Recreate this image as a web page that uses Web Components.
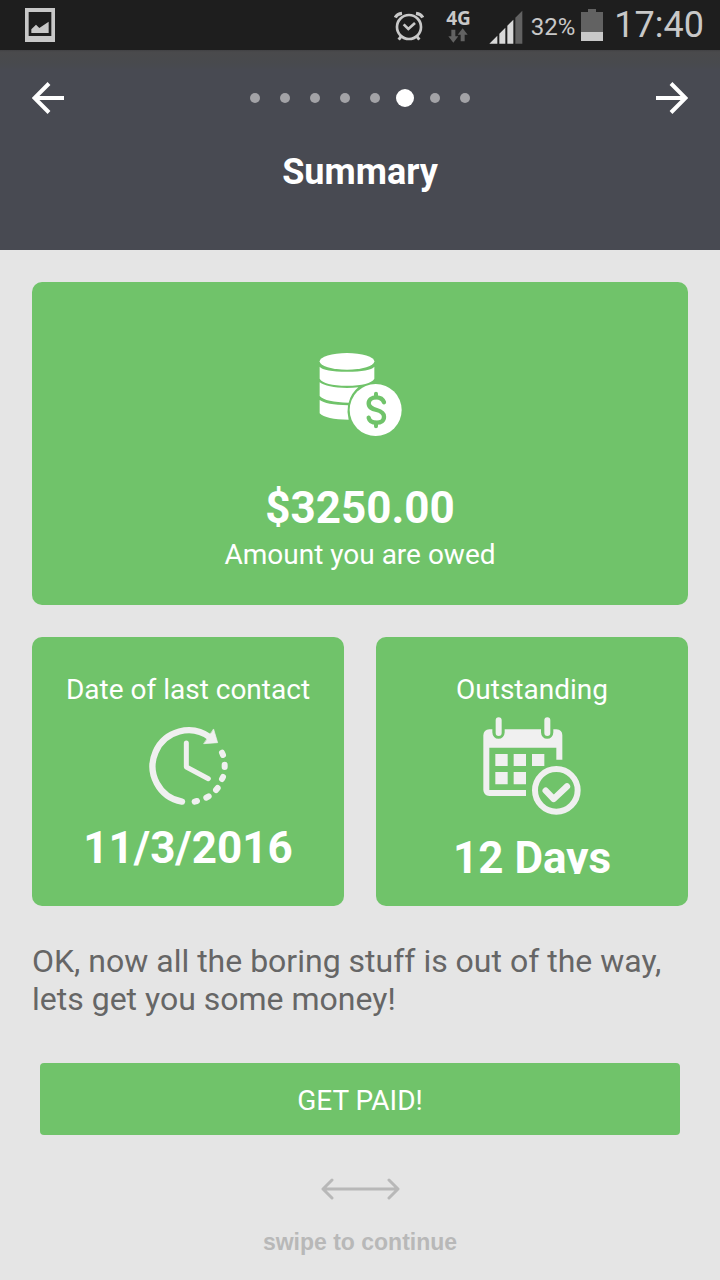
<!DOCTYPE html>
<html lang="en">
<head>
<meta charset="utf-8">
<meta name="viewport" content="width=device-width, initial-scale=1">
<title>Summary</title>
<style>
  html, body { margin: 0; min-height: 100%; background: #e5e5e5; }
  body { font-family: Roboto, "Liberation Sans", sans-serif; color: #666; --green: #70c36a; }
</style>
</head>
<body>
<summary-screen></summary-screen>

<script>
function define(name, html) {
  const template = document.createElement('template');
  template.innerHTML = html;
  customElements.define(name, class extends HTMLElement {
    constructor() {
      super();
      this.attachShadow({ mode: 'open' }).append(template.content.cloneNode(true));
    }
  });
}

define('status-bar', `
  <style>
    :host { display: flex; align-items: center; justify-content: space-between; height: 50px; padding: 0 16px 0 24px; background: #1e1e1e; color: #c8c8c8; }
    svg { display: block; flex: none; }
    .right { display: flex; align-items: center; }
    .alarm { margin-top: 2px; }
    .net { display: flex; flex-direction: column; align-items: center; margin: 0 18px 0 22px; font: 700 19px/20px "Noto Sans", sans-serif; }
    .signal { margin-top: 4px; }
    .pct { font-size: 24px; line-height: 50px; margin: 4px 6px 0 8px; }
    .time { font-size: 36px; line-height: 50px; margin-left: 11px; }
  </style>
  <svg width="32" height="34" viewBox="0 0 96 102" aria-hidden="true">
    <path d="M3 0H93V102H3Z" fill="#c8c8c8"/><path d="M14 12H82V84H14Z" fill="#1e1e1e"/>
    <path d="M22 75V64L36 50L46 60L74 41V75Z" fill="#c8c8c8"/>
  </svg>
  <div class="right">
    <svg class="alarm" width="30" height="30" viewBox="0 0 90 90" fill="none" stroke="#c8c8c8" aria-hidden="true">
      <circle cx="45" cy="48" r="36" stroke-width="8"/>
      <path d="M29 40L43 54L63 36" stroke-width="8"/>
      <path d="M4 20Q9 9 24 7M66 7Q81 9 86 20" stroke-width="10"/>
      <path d="M21 77L14 86M69 77L76 86" stroke-width="9"/>
    </svg>
    <div class="net"><span>4G</span>
      <svg width="20" height="15" viewBox="0 0 60 45" fill="#626262" aria-hidden="true"><path d="M10 5H22V25H31L16 44L1 25H10ZM38 40H50V20H59L44 1L29 20H38Z"/></svg>
    </div>
    <svg class="signal" width="34" height="34" viewBox="0 0 102 102" aria-hidden="true">
      <path d="M1 101L25 77V101ZM31 71L49 53V101H31ZM55 47L73 29V101H55Z" fill="#d8d8d8"/>
      <path d="M79 23L100 2V101H79Z" fill="#626262"/>
    </svg>
    <span class="pct">32%</span>
    <svg width="22" height="32" viewBox="0 0 22 32" aria-hidden="true"><path d="M7 0H15V3H22V23H0V3H7Z" fill="#626262"/><path d="M0 23H22V32H0Z" fill="#c8c8c8"/></svg>
    <span class="time">17:40</span>
  </div>`);

define('page-dots', `
  <style>
    :host { display: flex; align-items: center; gap: 20px; }
    i { width: 10px; height: 10px; border-radius: 50%; background: #a3a3a7; }
    i.on { width: 18px; height: 18px; margin: 0 -4px; background: #fff; }
  </style>
  <i></i><i></i><i></i><i></i><i></i><i class="on"></i><i></i><i></i>`);

define('step-header', `
  <style>
    :host { display: block; padding: 28px 32px 56px; color: #fff; background: linear-gradient(#414144, #4a4a4c 2px, #484a4e 14px, #484a52 20px); }
    nav { display: flex; align-items: center; justify-content: space-between; height: 40px; }
    button { display: block; padding: 0; border: 0; background: none; color: inherit; }
    svg { display: block; }
    h1 { margin: 32px 0 0; font-size: 36px; line-height: 44px; font-weight: 700; text-align: center; }
  </style>
  <nav>
    <button type="button" aria-label="Back"><svg width="32" height="32" viewBox="0 0 32 32" fill="none" stroke="currentColor" stroke-width="4"><path d="M32 16H3M17 1.500L2.500 16L17 30.500"/></svg></button>
    <page-dots></page-dots>
    <button type="button" aria-label="Next"><svg width="32" height="32" viewBox="0 0 32 32" fill="none" stroke="currentColor" stroke-width="4"><path d="M0 16H29M15 1.500L29.500 16L15 30.500"/></svg></button>
  </nav>
  <h1><slot></slot></h1>`);

define('info-tile', `
  <style>
    :host { display: block; box-sizing: border-box; padding: 32px 16px; border-radius: 10px; background: var(--green); color: #fff; text-align: center; }
    .content { height: 100%; overflow: hidden; }
    .label { display: block; font-size: 28px; line-height: 42px; }
    .value { display: block; font-size: 44px; line-height: 52px; font-weight: 700; }
  </style>
  <div class="content">
    <span class="label"><slot name="label"></slot></span>
    <slot name="icon"></slot>
    <span class="value"><slot></slot></span>
    <span class="label"><slot name="caption"></slot></span>
  </div>`);

define('coins-icon', `
  <style>:host { display: block; } svg { display: block; margin: auto; }</style>
  <svg width="120" height="168" viewBox="0 -63 360 504" fill="#fff" aria-hidden="true">
    <ellipse cx="141" cy="79" rx="82" ry="25"/>
    <path d="M59 95Q72 110 141 110T223 95V131Q210 152 141 152T59 131Z"/>
    <path d="M59 142Q80 158 141 159Q160 159 175 157Q153 175 146 203Q77 202 59 183Z"/>
    <path d="M59 195Q77 209 144 211Q140 232 146 254Q77 254 59 235Z"/>
    <circle cx="227" cy="225" r="78"/>
    <path d="M228 176V187M228 263V274" fill="none" stroke="#70c36a" stroke-width="12" stroke-linecap="round"/>
    <path d="M252 202C248 191 240 187 229 187C216 187 206 194 206 205C206 217 215 221 230 225C245 229 252 234 252 245C252 257 243 263 230 263C217 263 208 257 206 248" fill="none" stroke="#70c36a" stroke-width="13" stroke-linecap="round"/>
  </svg>`);

define('clock-icon', `
  <style>:host { display: block; } svg { display: block; margin: auto; }</style>
  <svg width="120" height="111" viewBox="-6 3 360 333" fill="none" stroke="#f0f0f0" stroke-linecap="round" aria-hidden="true">
    <path d="M156 275A108 108 0 1 1 240 82" stroke-width="19"/>
    <path d="M251 58L263 98L222 101Z" fill="#f0f0f0" stroke-width="2" stroke-linejoin="round"/>
    <path d="M169 99V171L235 206" stroke-width="15" stroke-linejoin="round"/>
    <path d="M276 128L279 135M284 164V171M279 201L276 207M263 234L258 240M236 259L229 263M201 273L194 275" stroke-width="18"/>
  </svg>`);

define('calendar-icon', `
  <style>:host { display: block; } svg { display: block; margin: auto; }</style>
  <svg width="130" height="121" viewBox="-9 18 390 363" fill="#f0f0f0" aria-hidden="true">
    <path fill-rule="evenodd" d="M58 73H67V82A18 19 0 0 0 104 82V73H213V82A18 19 0 0 0 250 82V73H259Q277 74 277 91V164H259V128H58V255H168V273H58Q41 272 40 255V91Q41 74 58 73Z"/>
    <path d="M86 46V84M232 46V84" stroke="#f0f0f0" stroke-width="18" stroke-linecap="round"/>
    <path d="M76 147h37v36H76ZM131 147h37v36h-37ZM186 147h37v36h-37ZM76 201h37v37H76ZM131 201h37v37h-37Z"/>
    <circle cx="259" cy="256" r="64" fill="none" stroke="#f0f0f0" stroke-width="18"/>
    <path d="M227 257L251 282L291 244" fill="none" stroke="#f0f0f0" stroke-width="19" stroke-linecap="round" stroke-linejoin="round"/>
  </svg>`);

define('swipe-hint', `
  <style>
    :host { display: flex; flex-direction: column; align-items: center; gap: 28px; color: #b8b8b8; font: 700 23px/28px "Liberation Sans", sans-serif; }
    svg { display: block; }
  </style>
  <svg width="80" height="22" viewBox="0 0 80 22" fill="none" stroke="currentColor" stroke-width="3" stroke-linecap="round" stroke-linejoin="round" aria-hidden="true"><path d="M3 11H78M12 2L3 11L12 20M69 2L78 11L69 20"/></svg>
  <slot></slot>`);

define('summary-screen', `
  <style>
    :host { display: block; }
    main { padding: 32px 32px 24px; }
    .hero { padding-bottom: 29px; }
    .pair { display: grid; grid-template-columns: 1fr 1fr; gap: 32px; margin: 32px 0; }
    .pair info-tile { height: 269px; }
    p { margin: 0; padding-top: 4px; font-size: 32px; line-height: 38px; }
    .pay { display: block; box-sizing: border-box; width: calc(100% - 16px); height: 72px; margin: 45px 8px 43px; padding: 3px 0 0; border: 0; border-radius: 4px; background: var(--green); color: #fff; font: 400 28px/36px Roboto, sans-serif; }
  </style>
  <status-bar></status-bar>
  <step-header>Summary</step-header>
  <main>
    <info-tile class="hero"><coins-icon slot="label"></coins-icon>$3250.00<span slot="caption">Amount you are owed</span></info-tile>
    <div class="pair">
      <info-tile><span slot="label">Date of last contact</span><clock-icon slot="icon"></clock-icon>11/3/2016</info-tile>
      <info-tile><span slot="label">Outstanding</span><calendar-icon slot="icon"></calendar-icon>12 Days</info-tile>
    </div>
    <p>OK, now all the boring stuff is out of the way, lets get you some money!</p>
    <button class="pay" type="button">GET PAID!</button>
    <swipe-hint>swipe to continue</swipe-hint>
  </main>`);
</script>
</body>
</html>
